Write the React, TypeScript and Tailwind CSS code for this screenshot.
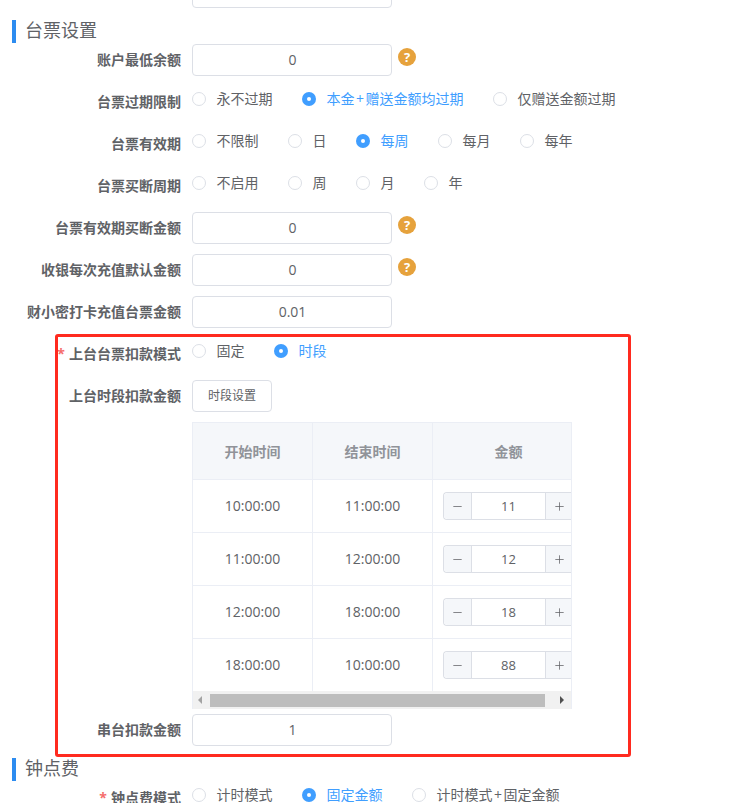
import React from "react";
import { Minus, Plus } from "lucide-react";

const Help = () => (
  <span className="ml-[6px] -mt-[6px] flex h-[18px] w-[18px] items-center justify-center rounded-full bg-[#e6a23c] text-[13px] font-bold leading-none text-white">?</span>
);

const Box = ({ v }: { v: string }) => (
  <div className="flex h-[32px] w-[200px] items-center justify-center rounded-[4px] border border-[#dcdfe6] bg-white pb-[2px] pl-[1px] text-[14px] text-[#606266]">{v}</div>
);

const Row = ({ label, req, children, radio }: { label?: string; req?: boolean; radio?: boolean; children: React.ReactNode }) => (
  <div className="mb-[10px] flex h-[32px]">
    <div className="flex h-[32px] w-[181px] items-center justify-end pb-[1px] text-[14px] font-bold text-[#606266]">
      {req && <span className="mr-[4px] text-[#f56c6c]">*</span>}
      {label}
    </div>
    <div className={radio ? "ml-[11px] flex h-[26px] items-center gap-[29.5px]" : "ml-[11px] flex items-center"}>{children}</div>
  </div>
);

const Radio = ({ t, on }: { t: React.ReactNode; on?: boolean }) => (
  <div className="flex items-center gap-[10.5px] text-[14px]">
    {on ? (
      <span className="flex h-[14px] w-[14px] items-center justify-center rounded-full bg-[#409eff]">
        <span className="h-[4px] w-[4px] rounded-full bg-white" />
      </span>
    ) : (
      <span className="h-[14px] w-[14px] rounded-full border border-[#dcdfe6] bg-white" />
    )}
    <span className={on ? "-mt-[2px] text-[#409eff]" : "-mt-[2px] text-[#606266]"}>{t}</span>
  </div>
);

const PlusSign = () => <span className="px-[1.5px]">+</span>;

const Heading = ({ t }: { t: string }) => (
  <div className="flex h-[23px] items-center border-l-[4px] border-[#2d8cf0] pb-[2px] pl-[9px] text-[18px] text-[#606266]">{t}</div>
);

const rows = [
  ["10:00:00", "11:00:00", "11"],
  ["11:00:00", "12:00:00", "12"],
  ["12:00:00", "18:00:00", "18"],
  ["18:00:00", "10:00:00", "88"],
];

const Stepper = ({ v }: { v: string }) => (
  <div className="flex h-[28px] w-[130px] shrink-0 rounded-l-[4px] border border-r-0 border-[#dcdfe6] bg-white">
    <span className="flex w-[28px] shrink-0 items-center justify-center rounded-l-[4px] border-r border-[#dcdfe6] bg-[#f5f7fa] text-[#606266]"><Minus size={13} strokeWidth={1.4} /></span>
    <span className="flex w-[73px] shrink-0 items-center justify-center pt-[1px] text-[13px] text-[#606266]">{v}</span>
    <span className="flex w-[28px] shrink-0 items-center justify-center border-l border-[#dcdfe6] bg-[#f5f7fa] text-[#606266]"><Plus size={13} strokeWidth={1.4} /></span>
  </div>
);

export default function App() {
  return (
    <div className="relative h-[803px] w-[732px] overflow-hidden bg-white font-['Open_Sans','Noto_Sans_CJK_SC',sans-serif]">
      <div className="ml-[192px] -mt-[24px] h-[32px] w-[200px] rounded-[4px] border border-[#dcdfe6]" />
      <div className="ml-[12px] mt-[12px] mb-[1px]"><Heading t="台票设置" /></div>

      <Row label="账户最低余额"><Box v="0" /><Help /></Row>
      <Row label="台票过期限制" radio>
        <Radio t="永不过期" /><Radio t={<>本金<PlusSign />赠送金额均过期</>} on /><Radio t="仅赠送金额过期" />
      </Row>
      <Row label="台票有效期" radio>
        <Radio t="不限制" /><Radio t="日" /><Radio t="每周" on /><Radio t="每月" /><Radio t="每年" />
      </Row>
      <Row label="台票买断周期" radio>
        <Radio t="不启用" /><Radio t="周" /><Radio t="月" /><Radio t="年" />
      </Row>
      <Row label="台票有效期买断金额"><Box v="0" /><Help /></Row>
      <Row label="收银每次充值默认金额"><Box v="0" /><Help /></Row>
      <Row label="财小密打卡充值台票金额"><Box v="0.01" /></Row>
      <Row label="上台台票扣款模式" req radio>
        <Radio t="固定" /><Radio t="时段" on />
      </Row>
      <Row label="上台时段扣款金额">
        <div className="flex h-[32px] w-[80px] items-center justify-center rounded-[4px] border border-[#dcdfe6] bg-white pb-[1px] text-[12px] text-[#606266]">时段设置</div>
      </Row>

      <div className="ml-[192px] w-[380px] overflow-hidden border border-b-0 border-[#ebeef5]">
        <div className="flex h-[57px] border-b border-[#ebeef5] bg-[#f5f7fa] text-[14px] font-bold text-[#909399]">
          <div className="flex w-[120px] shrink-0 items-center justify-center border-r border-[#ebeef5]">开始时间</div>
          <div className="flex w-[120px] shrink-0 items-center justify-center border-r border-[#ebeef5]">结束时间</div>
          <div className="flex w-[151px] shrink-0 items-center justify-center">金额</div>
        </div>
        {rows.map((r) => (
          <div key={r[0]} className="flex h-[53px] border-b border-[#ebeef5] text-[14px] text-[#606266] [&:nth-last-child(2)]:h-[52px] [&:nth-last-child(2)]:border-b-0">
            <div className="flex w-[120px] shrink-0 items-center justify-center border-r border-[#ebeef5] pb-[2px]">{r[0]}</div>
            <div className="flex w-[120px] shrink-0 items-center justify-center border-r border-[#ebeef5] pb-[2px]">{r[1]}</div>
            <div className="flex w-[151px] shrink-0 items-center pl-[10px]"><Stepper v={r[2]} /></div>
          </div>
        ))}
        <div className="flex h-[18px] items-center bg-[#f1f1f1]">
          <span className="ml-[5px] h-0 w-0 border-y-[4px] border-r-[4px] border-y-transparent border-r-[#a3a3a3]" />
          <span className="ml-[8px] h-[13px] w-[335px] bg-[#bdbdbd]" />
          <span className="ml-[15px] h-0 w-0 border-y-[4px] border-l-[4px] border-y-transparent border-l-[#505050]" />
        </div>
      </div>

      <div className="mt-[5px] mb-[12px] flex h-[32px]">
        <div className="flex w-[181px] items-center justify-end pb-[1px] text-[14px] font-bold text-[#606266]">串台扣款金额</div>
        <div className="ml-[11px]"><Box v="1" /></div>
      </div>
      <div className="ml-[12px] mb-[1px]"><Heading t="钟点费" /></div>
      <Row label="钟点费模式" req radio>
        <Radio t="计时模式" /><Radio t="固定金额" on /><Radio t={<>计时模式<PlusSign />固定金额</>} />
      </Row>

      <div className="pointer-events-none absolute left-[55px] top-[334px] h-[423px] w-[576px] rounded-[3px] border-[3px] border-[#ff2a1f]" />
    </div>
  );
}
